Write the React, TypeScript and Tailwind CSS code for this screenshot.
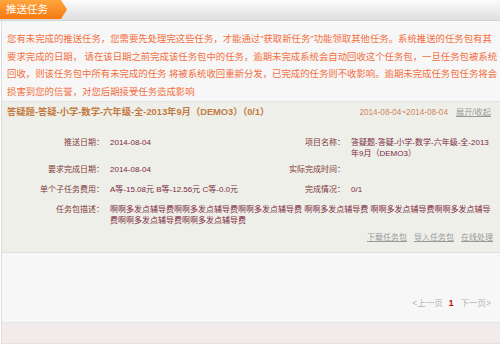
export default function App() {
  return (
    <div className="w-[500px] h-[347px] bg-white overflow-hidden font-['Liberation_Sans','Noto_Sans_CJK_SC',sans-serif]">
      {/* header */}
      <div className="h-[21px] flex items-start bg-gradient-to-b from-[#fcfcfc] to-[#dedede] border-b border-[#d4d4d4]">
        <div className="h-[19px] w-[67px] flex items-center pl-[6px] text-white text-[10.5px] bg-gradient-to-b from-[#ffa63c] to-[#f5780c] [clip-path:polygon(0_0,61px_0,67px_50%,61px_100%,0_100%)]">
          推送任务
        </div>
      </div>

      <div className="ml-px border-l border-[#dcdcdc]">
        {/* notice */}
        <div className="bg-[#f7f7f7] pl-[5px] pt-[9px] pb-[1px] text-[9.4px] leading-[17.5px] text-[#f26e3e] whitespace-nowrap border-b border-[#e3e3e3]">
          <div>您有未完成的推送任务，您需要先处理完这些任务，才能通过"获取新任务"功能领取其他任务。系统推送的任务包有其</div>
          <div>要求完成的日期， 请在该日期之前完成该任务包中的任务，逾期未完成系统会自动回收这个任务包，一旦任务包被系统</div>
          <div>回收，则该任务包中所有未完成的任务 将被系统收回重新分发，已完成的任务则不收影响。逾期未完成任务包任务将会</div>
          <div>损害到您的信誉，对您后期接受任务造成影响</div>
        </div>

        {/* task */}
        <div className="bg-[#efefe9] border-b border-[#e0e0e0] pb-[9px]">
          <div className="h-[22px] flex items-center justify-between pl-[5px] pr-[9px] whitespace-nowrap">
            <span className="text-[9.3px] font-bold text-[#c27a40]">答疑题-答疑-小学-数学-六年级-全-2013年9月（DEMO3）（0/1）</span>
            <span className="flex items-center gap-[8px] text-[8.2px]">
              <span className="text-[#cf8660]">2014-08-04~2014-08-04</span>
              <span className="text-[#9a9a9a] underline">展开/收起</span>
            </span>
          </div>

          <div className="pt-[13px] text-[8px] leading-[11px] whitespace-nowrap">
            <div className="flex">
              <div className="w-[102px] text-right text-[#7d3a3a]">推送日期：</div>
              <div className="w-[140px] pl-[6px] text-[#7b2a42]">2014-08-04</div>
              <div className="w-[101px] text-right text-[#7d3a3a]">项目名称：</div>
              <div className="pl-[6px] text-[#7b2a42]">
                答疑题-答疑-小学-数学-六年级-全-2013
                <br />
                年9月（DEMO3）
              </div>
            </div>
            <div className="flex mt-[5px]">
              <div className="w-[102px] text-right text-[#7d3a3a]">要求完成日期：</div>
              <div className="w-[140px] pl-[6px] text-[#7b2a42]">2014-08-04</div>
              <div className="w-[101px] text-right text-[#7d3a3a]">实际完成时间：</div>
              <div className="pl-[6px] text-[#7b2a42]"></div>
            </div>
            <div className="flex mt-[9px]">
              <div className="w-[102px] text-right text-[#7d3a3a]">单个子任务费用：</div>
              <div className="w-[140px] pl-[6px] text-[#7b2a42]">A等-15.08元 B等-12.56元 C等-0.0元</div>
              <div className="w-[101px] text-right text-[#7d3a3a]">完成情况：</div>
              <div className="pl-[6px] text-[#7b2a42]">0/1</div>
            </div>
            <div className="flex mt-[9px]">
              <div className="w-[102px] text-right text-[#7d3a3a]">任务包描述：</div>
              <div className="pl-[6px] text-[#7b2a42]">
                啊啊多发点辅导费啊啊多发点辅导费啊啊多发点辅导费 啊啊多发点辅导费 啊啊多发点辅导费啊啊多发点辅导
                <br />
                费啊啊多发点辅导费啊啊多发点辅导费
              </div>
            </div>
            <div className="flex justify-end gap-[7px] mt-[6px] pr-[7px] text-[#999999]">
              <span className="underline">下载任务包</span>
              <span className="underline">导入任务包</span>
              <span className="underline">在线处理</span>
            </div>
          </div>
        </div>

        {/* pagination */}
        <div className="h-[70px] bg-[#f7f7f7] border-b border-[#e4e4e4] flex justify-end items-start pt-[45px] pr-[9px] text-[8.5px] leading-[11px] whitespace-nowrap">
          <span className="text-[#b4b4b4]">&lt;上一页</span>
          <span className="ml-[6px] font-bold text-[#c40000]">1</span>
          <span className="ml-[7px] text-[#b4b4b4]">下一页&gt;</span>
        </div>

        {/* footer strip */}
        <div className="h-[21px] bg-[#f1ebeb] border-b border-[#e6e0e0]"></div>
      </div>
    </div>
  );
}
